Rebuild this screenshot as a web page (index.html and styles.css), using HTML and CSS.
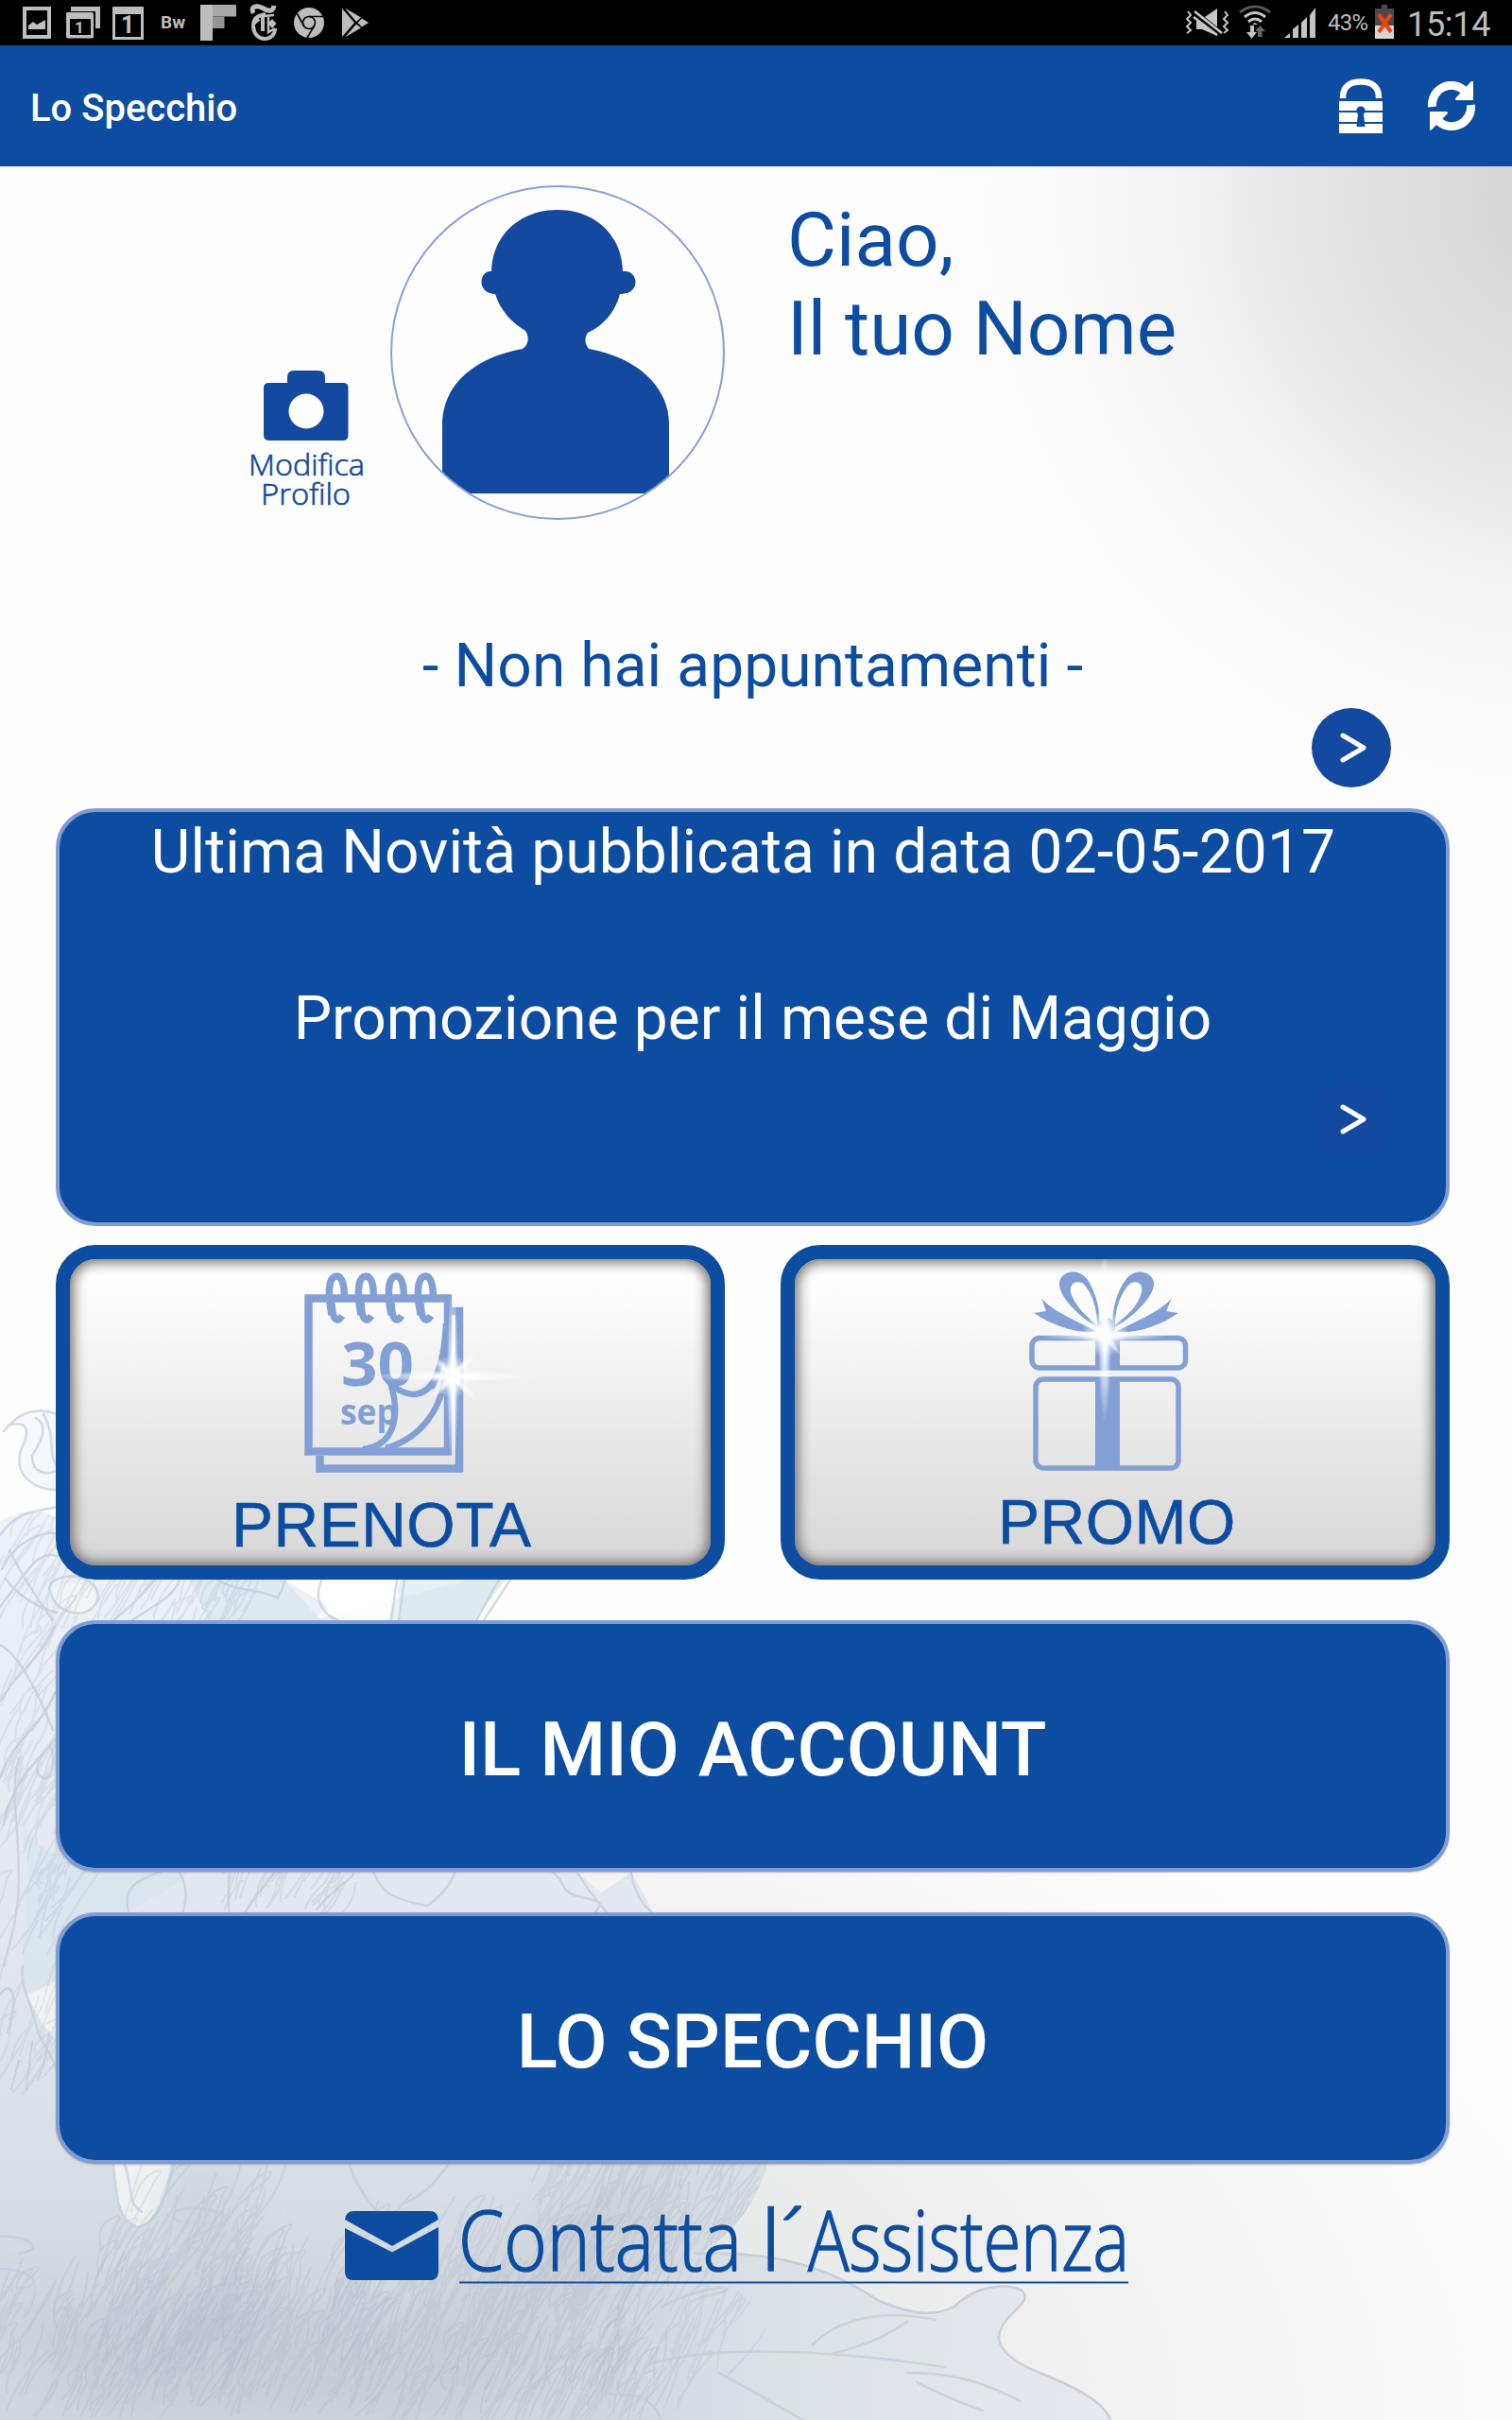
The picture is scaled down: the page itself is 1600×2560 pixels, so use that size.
FILE: index.html
```html
<!DOCTYPE html>
<html lang="it">
<head>
  <meta charset="UTF-8" />
  <meta name="viewport" content="width=device-width, initial-scale=1.0" />
  <title>Lo Specchio</title>
  <link rel="stylesheet" href="styles.css">
</head>
<body>
  <!-- sfondo: disegno a matita in basso a sinistra -->
  <svg class="sfondo" viewBox="0 0 1600 2560" aria-hidden="true">
    <defs>
      <linearGradient id="fade" x1="0" y1="1480" x2="0" y2="2480" gradientUnits="userSpaceOnUse">
        <stop offset="0" stop-color="#f1f5fa" />
        <stop offset="0.35" stop-color="#e7edf4" />
        <stop offset="0.7" stop-color="#dce3ea" />
        <stop offset="1" stop-color="#d0d6dd" />
      </linearGradient>
      <linearGradient id="ala" x1="640" y1="0" x2="1180" y2="0" gradientUnits="userSpaceOnUse">
        <stop offset="0" stop-color="#d0d6dd" />
        <stop offset="0.35" stop-color="#dce1e6" />
        <stop offset="1" stop-color="#e6eaee" />
      </linearGradient>
      <filter id="soft" x="-20%" y="-20%" width="140%" height="140%"><feGaussianBlur stdDeviation="30" /></filter>
      <clipPath id="figura">
        <path d="M0 1610C30 1590 60 1595 110 1640L300 1671 350 1700 330 1714 540 1660 500 1720 420 1900 480 1980 452 2016 430 2010C410 2000 400 1990 395 1980L610 1980 636 2002 668 1980C680 2000 690 2020 694 2030L812 2290C800 2330 780 2360 738 2386 L800 2440 860 2560 0 2560Z" />
      </clipPath>
    </defs>

    <g fill="url(#fade)">
      <path d="M0 1610C30 1590 60 1595 110 1640L300 1671 350 1700 330 1714 540 1660 500 1720 420 1900 480 1980 452 2016 430 2010C410 2000 400 1990 395 1980L610 1980 636 2002 668 1980C680 2000 690 2020 694 2030L812 2290C800 2330 780 2360 738 2386L640 2440V2560H0Z" />
      <path d="M6 1512C24 1490 56 1482 76 1500L76 1576C50 1578 24 1566 20 1540 18 1524 34 1510 20 1502Z" opacity="0.6" />
    </g>
    <path d="M735 2384C820 2380 880 2400 930 2434 970 2450 990 2450 1010 2440 1030 2420 1060 2414 1080 2422 1096 2434 1066 2446 1060 2462 1050 2480 1066 2496 1100 2510 1150 2530 1170 2545 1175 2560L640 2560V2430Z" fill="url(#ala)" />
    <path d="M735 2384C820 2380 880 2400 930 2434 970 2450 990 2450 1010 2440 1030 2420 1060 2414 1080 2422 1096 2434 1066 2446 1060 2462 1050 2480 1066 2496 1100 2510 1150 2530 1170 2545 1175 2560" fill="none" stroke="#c9cfd9" stroke-width="2.5" />
    <path d="M22 1920C40 1980 90 1960 200 1980 180 2010 110 2020 90 2060 60 2100 30 2110 22 2100L30 1980ZM200 1671H300L340 1714H220ZM420 1671H536L500 1714H424Z" fill="#d5e5ec" opacity="0.6" />
    <path d="M120 2289H180C178 2320 165 2350 145 2356 125 2352 122 2320 120 2289ZM30 2110L60 2096V2160C44 2140 34 2126 30 2110ZM58 1680C70 1670 96 1674 100 1686 104 1700 90 1710 76 1708 60 1702 54 1690 58 1680Z" fill="#f4f6f5" opacity="0.8" />
    <path d="M340 1672C336 1690 346 1706 360 1714H410L424 1671H344Z" fill="#fff" opacity="0.85" />

    <!-- ombre piu dense -->
    <g clip-path="url(#figura)">
      <g fill="#b3b9c4" filter="url(#soft)" opacity="0.34">
        <path d="M0 2400C90 2450 200 2500 320 2480 440 2450 560 2480 640 2400L740 2290 640 2290 560 2400 420 2450 260 2430 230 2290 190 2290 200 2430 60 2440 0 2400Z" />
        <path d="M0 2440L420 2480 600 2470 480 2550H100Z" />
      </g>
      <g id="tratteggio"></g>
    </g>
    <g fill="none" stroke="#c3ccda" stroke-width="2.5" stroke-linecap="round" opacity="0.7">
      <path d="M4 1514C20 1494 36 1488 60 1496M8 1508C34 1500 30 1520 22 1534 14 1560 36 1576 60 1576M38 1500C54 1510 40 1530 34 1540 34 1560 50 1560 60 1556M46 1496C60 1520 50 1540 60 1550" />
      <path d="M0 1624C20 1596 36 1600 60 1594M2 1660C16 1630 44 1620 60 1622M0 1700C30 1660 40 1640 60 1646M6 1670C20 1690 40 1700 60 1706M10 1640C30 1680 46 1700 56 1714" />
      <path d="M52 1680C54 1664 100 1660 104 1688 102 1712 60 1716 52 1680M120 1714C150 1690 156 1680 164 1671M140 1714C160 1700 184 1690 190 1671M230 1671C250 1684 270 1680 294 1690 300 1680 300 1676 302 1671M340 1672C330 1696 346 1710 358 1714M420 1671 414 1714M428 1671 422 1714M528 1671 504 1714M540 1671 512 1714" />
      <path d="M0 1740C20 1750 40 1790 56 1830M0 1800C24 1760 40 1760 58 1720M0 1880C20 1830 44 1830 58 1790M4 1930C10 1890 40 1860 50 1850S58 1890 44 1880 50 1850 58 1840M20 1860C10 1900 20 1920 20 1990 18 2040 8 2060 4 2080M24 2080C20 2100 34 2120 40 2150 50 2170 56 2176 60 2190M0 2110C14 2090 20 2120 8 2150M12 2210 20 2180M28 2210 34 2160M40 2200C50 2180 50 2160 52 2150" />
      <path d="M136 2023C130 2000 140 1990 170 1980M190 1980C200 2000 196 2010 194 2023M242 1980V2023M260 2023C270 2000 280 2000 290 1980M335 2020C350 2000 370 1990 374 1982M395 1980C404 2000 410 2008 452 2016 470 2004 478 1990 482 1980M584 1980C600 1990 590 2000 612 2006S640 2010 630 2023M612 1982C622 2000 636 2016 642 2023M668 1980C670 2000 680 2016 690 2023" />
      <path d="M120 2290C124 2330 126 2350 146 2356 170 2350 176 2320 184 2290M132 2290C140 2310 134 2330 150 2340M370 2290C376 2310 390 2330 400 2340M430 2330C450 2320 460 2310 474 2290M120 2470C150 2410 180 2380 200 2350M140 2470C160 2420 180 2390 196 2370M190 2350C170 2340 200 2330 230 2340 260 2350 210 2360 200 2370S260 2390 266 2410 230 2420 220 2430M0 2366C30 2364 50 2380 20 2384M0 2400C34 2400 50 2420 20 2420M340 2470C320 2460 350 2440 390 2436" />
      <path d="M700 2440C760 2410 800 2420 740 2430M690 2500C760 2480 880 2486 1000 2504M860 2480C880 2460 920 2440 990 2454M880 2490C920 2480 940 2470 960 2456M960 2510C1010 2510 1040 2520 1080 2540M970 2520C990 2530 1010 2540 1040 2550M760 2510C800 2530 830 2550 850 2560M640 2530C660 2540 680 2520 700 2560" />
    </g>
  </svg>

  <div class="status-bar">
    <div class="status-left">
      <svg viewBox="0 0 400 48" width="400" height="48">
        <g fill="#bdbdbd">
          <path fill-rule="evenodd" d="M24 7H54V41H24ZM28 11V37H50V11ZM30 31V27L35 23 39 26 48 21V31Z" />
          <path fill-rule="evenodd" d="M75 7H106V30H101V12H75ZM70 14Q70 13 72 13H97Q99 13 99 15V39Q99 40.500 97 40.500H72Q70 40.500 70 39ZM74 20V37H96V20Z" />
          <path fill-rule="evenodd" d="M119 7H152V42H119ZM122 15V39H149V15Z" />
          <path d="M212 5H225V43H212Z" />
          <path d="M225 5H250V17.500H225Z" fill="#a8a8a8" />
          <path d="M225 17.500H237.500V30H225Z" fill="#949494" />
          <path d="M362 9 375 24 362 39ZM365 8.500 382 18.500 377 23ZM383 19.500 390 24 383 28.500 378.500 24ZM365 39.500 377 25.500 382 29.500Z" />
        </g>
        <text class="st-num-sm" x="79" y="35">1</text>
        <text class="st-num" x="128" y="35">1</text>
        <text class="st-bw" x="170" y="30">Bw</text>
        <!-- testata del giornale -->
        <g fill="none" stroke="#bdbdbd">
          <path d="M268 14C264 5 274 6 279 9S289 13 290 6" stroke-width="5" />
          <path d="M281 15C270 17 268 21 268 28 269 37 274 41 280 41 287 41 291 36 291 30" stroke-width="4" />
          <path d="M278 16V33M268 25 274 20" stroke-width="4" />
          <path d="M279 17 290 16M284 18V34L291 30" stroke-width="2.500" />
        </g>
        <path d="M288 20 292.500 25 288 30 283.500 25Z" fill="#bdbdbd" />
        <circle cx="327" cy="24" r="16" fill="#bdbdbd" />
        <g fill="none" stroke="#000" stroke-width="1.600">
          <circle cx="327" cy="24" r="6.500" />
          <path d="M327 17.500H342M321.500 27.500 314.500 14.500M332.500 27.500 325 40" />
        </g>
      </svg>
    </div>
    <div class="status-right">
      <svg viewBox="0 0 150 48" width="150" height="48">
        <g fill="#c4c4c4">
          <path d="M16 20H22L38 9V38L22 31H16Z" />
          <path d="M109 40 115 35V40ZM118 31 124 26V40H118ZM127 24 133 18V40H127ZM136 16 142 8V40H136Z" />
          <path d="M73 27H77V34H80L74.500 41 69 34H73Z" />
        </g>
        <path d="M13 13 43 37" stroke="#000" stroke-width="7" />
        <path d="M14 12 43 35M13 18 38 37" stroke="#c4c4c4" stroke-width="2.600" />
        <path d="M7 12 10 16 6 20 10 24 6 28 10 32 6 35M46 12 49 16 45 20 49 24 45 28 49 32 45 35" fill="none" stroke="#c4c4c4" stroke-width="2" />
        <path d="M62 13Q78 1 94 13" fill="none" stroke="#555" stroke-width="3" />
        <path d="M67 18Q78 9 89 18M71 23Q78 17 85 23" fill="none" stroke="#c4c4c4" stroke-width="3" />
        <path d="M75 26 78 24 81 26Z" fill="#c4c4c4" />
        <path d="M81 39V33H78L83.500 27 89 33H85.500V39Z" fill="#666" />
      </svg>
      <span class="batteria">43%</span>
      <svg viewBox="0 0 20 48" width="20" height="48">
        <path d="M7 5H13V9H20V27H0V9H7Z" fill="#4a4a4a" />
        <path d="M0 27H20V41H0Z" fill="#d6d6d6" />
        <path d="M4 15 17 34M17 15 4 34" stroke="#f4420c" stroke-width="4" />
      </svg>
      <span class="ora">15:14</span>
    </div>
  </div>

  <header>
    <h1>Lo Specchio</h1>
    <div class="azioni">
      <svg viewBox="0 0 46 58" width="46" height="58">
        <path d="M4 21V20C4 8 12 3.500 23 3.500S42 8 42 20V21" fill="none" stroke="#fff" stroke-width="6.500" />
        <path d="M0 24H46V34H0ZM0 36H46V46H0ZM0 48H46V58H0Z" fill="#fff" />
        <path d="M23 29.500A4.500 4.500 0 0 1 26 37.500L27.500 51H18.500L20 37.500A4.500 4.500 0 0 1 23 29.500Z" fill="#0d4da1" />
      </svg>
      <svg viewBox="0 0 50 52" width="50" height="52">
        <path d="M4.500 27A20.500 20.500 0 0 1 39 10M45.500 25A20.500 20.500 0 0 1 11 42" fill="none" stroke="#fff" stroke-width="9" />
        <path d="M48 1V20H30Q28 19 30 17L46 0Q48 -1 48 1ZM2 51V32H20Q22 33 20 35L4 51Q2 53 2 51Z" fill="#fff" />
      </svg>
    </div>
  </header>

  <main>
    <section class="profilo">
      <a class="modifica" href="#foto">
        <svg viewBox="0 0 90 74" width="90" height="74">
          <path fill-rule="evenodd" d="M25 13V7Q25 0 32 0H58Q65 0 65 7V13H84Q89.500 13 89.500 18V68Q89.500 74 84 74H6Q0 74 0 68V18Q0 13 6 13ZM45 24.500A18.500 18.500 0 1 0 45 61.500 18.500 18.500 0 1 0 45 24.500Z" fill="#134a9f" />
        </svg>
        <svg class="etichetta" viewBox="0 0 130 80" width="130" height="80">
          <text x="4" y="37" textLength="123" lengthAdjust="spacingAndGlyphs">Modifica</text>
          <text x="17" y="68" textLength="95" lengthAdjust="spacingAndGlyphs">Profilo</text>
        </svg>
      </a>
      <svg class="avatar" viewBox="0 0 354 354" width="354" height="354">
        <clipPath id="tondo"><circle cx="177" cy="177" r="176" /></clipPath>
        <g fill="#134a9f" clip-path="url(#tondo)">
          <path d="M107 91C108 52 138 26 177 26S245 52 246 91C263 89 264 115 243 115 238 134 226 148 209 156 205 162 206 168 210 173 262 182 295 214 295 252V326H55V252C56 210 90 182 140 173 147 168 147 160 143 154 130 146 117 134 111 115 93 115 93 90 107 91Z" />
          <circle cx="248" cy="102.500" r="11.500" />
          <circle cx="108" cy="102.500" r="11.500" />
        </g>
        <circle cx="177" cy="177" r="176" fill="none" stroke="#8a9fd6" stroke-width="2" />
      </svg>
      <p class="saluto">Ciao,<br>Il tuo Nome</p>
    </section>

    <section class="appuntamenti">
      <p>- Non hai appuntamenti -</p>
      <a class="freccia" href="#appuntamenti">
        <svg viewBox="0 0 84 84" width="84" height="84"><path d="M33 29 55 42 33 55" fill="none" stroke="#fff" stroke-width="5" stroke-linecap="round" stroke-linejoin="round" /></svg>
      </a>
    </section>

    <section class="novita">
      <p class="data">Ultima Novità pubblicata in data 02-05-2017</p>
      <p>Promozione per il mese di Maggio</p>
      <a class="freccia" href="#novita">
        <svg viewBox="0 0 84 84" width="84" height="84"><path d="M33 29 55 42 33 55" fill="none" stroke="#fff" stroke-width="5" stroke-linecap="round" stroke-linejoin="round" /></svg>
      </a>
    </section>

    <section class="riquadri">
      <a class="riquadro" href="#prenota">
        <svg viewBox="74 1332 678 240" width="678" height="240">
          <defs>
            <radialGradient id="luce">
              <stop offset="0" stop-color="#fff" />
              <stop offset="0.25" stop-color="#fff" stop-opacity="0.9" />
              <stop offset="1" stop-color="#fff" stop-opacity="0" />
            </radialGradient>
          </defs>
          <g fill="none" stroke="#82a0d6" stroke-width="8.500">
            <path d="M326.500 1373.500H474V1535.500H326.500Z" />
            <path d="M338.500 1540V1553.500H486V1387H478" />
            <path d="M351 1391C345 1360 350 1350 356.500 1350S366 1366 363 1376M382 1391C376 1360 381 1350 387.500 1350S397 1366 394 1376M414 1391C408 1360 413 1350 419.500 1350S429 1366 426 1376M445 1391C439 1360 444 1350 450.500 1350S460 1366 457 1376M351 1378C352 1400 358 1398 362 1392M382 1378C383 1400 389 1398 393 1392M414 1378C415 1400 421 1398 425 1392M445 1378C446 1400 452 1398 456 1392" stroke-width="7.500" />
          </g>
          <g class="giorno">
            <text x="361" y="1466" font-size="65" textLength="77" lengthAdjust="spacingAndGlyphs">30</text>
            <text x="360" y="1507" font-size="38" textLength="61" lengthAdjust="spacingAndGlyphs">sep</text>
          </g>
          <path d="M414 1466C424 1474 446 1480 466 1440V1470C464 1496 440 1522 410 1530 420 1510 424 1490 414 1466Z" fill="#ebebeb" />
          <g fill="none" stroke="#82a0d6" stroke-width="6.500">
            <path d="M472 1400C470 1440 462 1474 438 1475 426 1475 420 1468 414 1466 424 1500 416 1530 384 1533M472 1450C468 1490 446 1522 408 1532M472 1420C466 1440 462 1462 456 1468" />
          </g>
          <g fill="url(#luce)">
            <ellipse cx="479" cy="1456" rx="88" ry="6" />
            <ellipse cx="479" cy="1456" rx="6.500" ry="96" />
            <ellipse cx="479" cy="1456" rx="38" ry="5" transform="rotate(45 479 1456)" />
            <ellipse cx="479" cy="1456" rx="38" ry="5" transform="rotate(-45 479 1456)" />
            <circle cx="479" cy="1456" r="23" />
          </g>
        </svg>
        <span class="nome prenota">PRENOTA</span>
      </a>
      <a class="riquadro" href="#promo">
        <svg viewBox="841 1332 678 240" width="678" height="240">
          <g fill="none" stroke="#82a0d6" stroke-width="5.500">
            <rect x="1092" y="1415.500" width="162.500" height="31.500" rx="8" />
            <rect x="1096" y="1459" width="151" height="94" rx="8" />
          </g>
          <g fill="#82a0d6">
            <path d="M1159 1413H1185V1449H1159ZM1159 1457H1185V1555H1159Z" />
            <path fill-rule="evenodd" d="M1164 1406C1140 1392 1119 1370 1121 1356 1124 1344 1142 1341 1151 1354 1160 1368 1164 1384 1164 1406ZM1161 1401C1161 1382 1154 1364 1145 1357 1136 1354 1130 1361 1134 1370 1139 1382 1148 1392 1161 1401Z" />
            <path fill-rule="evenodd" d="M1177 1406C1201 1392 1223 1370 1221 1356 1218 1344 1200 1341 1191 1354 1181 1368 1177 1384 1177 1406ZM1180 1401C1180 1382 1188 1364 1197 1357 1206 1354 1211 1361 1207 1370 1203 1382 1193 1392 1180 1401Z" />
            <path d="M1102 1373C1112 1386 1136 1396 1162 1409 1138 1411 1114 1402 1094 1389L1107 1387ZM1240 1373C1230 1386 1206 1396 1180 1409 1204 1411 1228 1402 1247 1389L1234 1387Z" />
            <ellipse cx="1171" cy="1405" rx="9" ry="11" />
          </g>
          <g fill="url(#luce)">
            <ellipse cx="1169" cy="1413" rx="66" ry="6" />
            <ellipse cx="1169" cy="1413" rx="7" ry="92" />
            <ellipse cx="1169" cy="1413" rx="28" ry="4" transform="rotate(50 1169 1413)" />
            <circle cx="1169" cy="1411" r="25" />
          </g>
        </svg>
        <span class="nome promo">PROMO</span>
      </a>
    </section>

    <a class="voce" href="#account">IL MIO ACCOUNT</a>
    <a class="voce" href="#specchio">LO SPECCHIO</a>

    <a class="assistenza" href="#assistenza">
      <svg viewBox="0 0 99 73" width="99" height="73">
        <path d="M0 9Q1 0 9 0H90Q98 0 99 9L50 37ZM0 18 50 43.500 99 17V65Q98 73 91 73H8Q1 73 0 65Z" fill="#0d4da1" />
      </svg>
      <svg class="contatta" viewBox="0 0 720 130" width="720" height="130">
        <text x="-1" y="100" textLength="300" lengthAdjust="spacingAndGlyphs">Contatta</text>
        <text x="319" y="100" textLength="46" lengthAdjust="spacingAndGlyphs">l´</text>
        <text x="369" y="100" textLength="340" lengthAdjust="spacingAndGlyphs">Assistenza</text>
        <path d="M0 112.500H708" stroke="#0d4da1" stroke-width="2.200" />
      </svg>
    </a>
  </main>

  <script>
    // tratteggio a matita, sempre uguale ad ogni caricamento
    let seme = 7;
    function caso() {
      seme = (seme * 16807) % 2147483647;
      return seme / 2147483647;
    }

    function tratteggia(x, y, w, h, quanti, lungo, opacita) {
      let d = '';
      for (let i = 0; i < quanti; i++) {
        const px = x + caso() * w;
        const py = y + caso() * h;
        const l = lungo * (0.5 + caso());
        const dx = l * (0.25 + caso() * 0.5);
        const curva = (caso() - 0.5) * l * 0.5;
        d += `M${px.toFixed(0)} ${py.toFixed(0)}q${(dx / 2 + curva).toFixed(0)} ${(-l / 2).toFixed(0)} ${dx.toFixed(0)} ${(-l).toFixed(0)}`;
        if (i % 4 === 0) {
          d += `q12 -14 -4 -6t${(-dx / 2).toFixed(0)} ${(l / 2).toFixed(0)}`;
        }
      }
      const p = document.createElementNS('http://www.w3.org/2000/svg', 'path');
      p.setAttribute('d', d);
      p.setAttribute('class', 'tratto');
      p.setAttribute('opacity', opacita);
      document.getElementById('tratteggio').appendChild(p);
    }

    tratteggia(-10, 1620, 70, 450, 90, 60, 0.22);
    tratteggia(60, 1680, 200, 50, 40, 40, 0.22);
    tratteggia(230, 1990, 150, 40, 30, 36, 0.25);
    tratteggia(-10, 2110, 60, 130, 16, 70, 0.2);
    tratteggia(560, 2300, 220, 120, 110, 60, 0.24);
    tratteggia(340, 2400, 320, 130, 180, 60, 0.22);
    tratteggia(100, 2370, 160, 170, 100, 70, 0.22);
    tratteggia(-20, 2440, 420, 120, 240, 50, 0.24);
    tratteggia(400, 2540, 300, 40, 60, 60, 0.22);
    tratteggia(620, 2440, 160, 110, 40, 60, 0.2);
  </script>
</body>
</html>
```
FILE: styles.css
```css
* {
  box-sizing: border-box;
}
body {
  font-family: Roboto, sans-serif;
  margin: 0;
  min-height: 2560px;
  position: relative;
  color: #0d4da1;
  background:
    radial-gradient(ellipse 700px 700px at 1660px 210px, #d3d3d3 0%, #dfdfdf 28%, #f3f3f3 60%, #fcfcfc 84%, rgba(255,255,255,0) 100%),
    radial-gradient(ellipse 1750px 900px at 0 2560px, #ced4d8 0%, #dcdfe1 30%, #eeeeee 60%, rgba(255,255,255,0) 100%),
    #fefefe;
}
p, h1 {
  margin: 0;
}
a {
  color: inherit;
  text-decoration: none;
}
svg {
  display: block;
}
.sfondo {
  position: absolute;
  top: 0;
  left: 0;
  width: 1600px;
  height: 2560px;
  z-index: -1;
}
.tratto {
  fill: none;
  stroke: #aab3c4;
  stroke-width: 2px;
  stroke-linecap: round;
}

/* barra di stato */
.status-bar {
  display: flex;
  justify-content: space-between;
  height: 48px;
  background: #000;
  color: #bdbdbd;
}
.status-right {
  display: flex;
  width: 350px;
}
.st-num-sm,
.st-num,
.st-bw {
  font-family: Roboto, sans-serif;
  font-weight: 700;
  font-size: 17px;
  fill: #bdbdbd;
}
.st-num {
  font-size: 25px;
}
.st-bw {
  font-size: 19px;
}
.batteria {
  width: 50px;
  padding-left: 5px;
  font-size: 24px;
  line-height: 49px;
  letter-spacing: -0.8px;
}
.status-right svg {
  flex: none;
}
.batteria + svg {
  margin-left: 5px;
}
.ora {
  padding-left: 14px;
  font-size: 36px;
  line-height: 53px;
  letter-spacing: -0.3px;
}

header {
  display: flex;
  justify-content: space-between;
  align-items: center;
  height: 128px;
  padding: 0 39px 0 32px;
  background: #0d4da1;
  color: #fff;
}
h1 {
  padding-top: 4px;
  font-size: 40px;
  font-weight: 500;
  line-height: 47px;
}
.azioni {
  display: flex;
  align-items: center;
  gap: 48px;
}

main {
  padding: 0 66px 0 59px;
}

.profilo {
  display: flex;
  height: 491px;
  padding-top: 20px;
}
.modifica {
  width: 130px;
  margin-left: 200px;
  padding-top: 196px;
}
.modifica svg:first-child {
  margin-left: 20px;
}
.etichetta text {
  font-family: "Open Sans", sans-serif;
  font-weight: 300;
  font-size: 32px;
  fill: #134a9f;
  stroke: #134a9f;
  stroke-width: 0.7px;
}
.avatar {
  margin-left: 24px;
}
.saluto {
  margin-left: 66px;
  padding-top: 11px;
  font-size: 80px;
  line-height: 94px;
}

.appuntamenti p,
.novita p {
  font-size: 64px;
  line-height: 75px;
  text-align: center;
  letter-spacing: 0.1px;
}
.appuntamenti {
  height: 188px;
}
.freccia {
  display: block;
  width: 84px;
  height: 84px;
  margin-left: auto;
  margin-right: 62px;
  border-radius: 50%;
  background: #134a9f;
}
.appuntamenti .freccia {
  margin-top: 7px;
}

.novita {
  height: 442px;
  padding-top: 5px;
  border: 4px solid #7f9dd4;
  border-radius: 42px;
  background: #0d4da1;
  color: #fff;
}
.novita .data {
  margin-bottom: 101px;
  padding-right: 20px;
  letter-spacing: 0.15px;
}
.novita .freccia {
  margin-top: 27px;
  margin-right: 58px;
}

.riquadri {
  display: flex;
  justify-content: space-between;
  margin-top: 20px;
}
.riquadro {
  width: 708px;
  height: 354px;
  border: 15px solid #0d4da1;
  border-radius: 42px;
  background: linear-gradient(#fff 5%, #d8d8d8 96%);
  box-shadow: inset 0 0 14px 3px #6b6560;
}
.riquadro .nome {
  display: block;
  font-family: "Liberation Sans", Arial, sans-serif;
  font-size: 66px;
  line-height: 74px;
  letter-spacing: 0.5px;
  -webkit-text-stroke: 0.6px #0d4da1;
}
.prenota {
  margin-left: 171px;
  margin-top: 4px;
}
.promo {
  margin-left: 215px;
  margin-top: 1px;
}
.giorno {
  font-family: "Open Sans", sans-serif;
  font-weight: 700;
  fill: #82a0d6;
}

.voce {
  display: block;
  height: 266px;
  margin-top: 43px;
  padding-top: 2px;
  border: 4px solid #7f9dd4;
  border-radius: 42px;
  background: #0d4da1;
  box-shadow: 0 1px 2px rgba(90,90,90,0.4);
  color: #fff;
  font-size: 80px;
  font-weight: 500;
  line-height: 262px;
  text-align: center;
}

.assistenza {
  display: flex;
  margin: 50px 0 0 306px;
}
.contatta {
  margin: -37px 0 0 22px;
}
.contatta text {
  font-family: "Open Sans", sans-serif;
  font-weight: 300;
  font-size: 88px;
  fill: #0d4da1;
  stroke: #0d4da1;
  stroke-width: 1.6px;
}
```
